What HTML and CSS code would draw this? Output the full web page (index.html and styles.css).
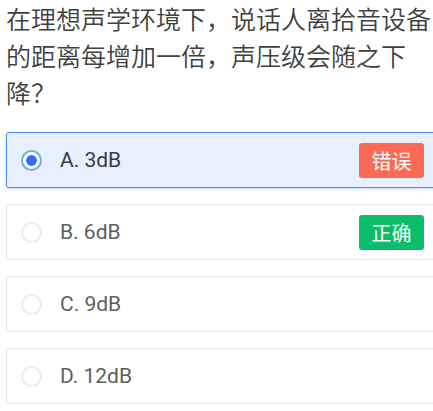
FILE: index.html
```html
<!DOCTYPE html>
<html lang="zh">
<head>
<meta charset="utf-8">
<link rel="stylesheet" href="styles.css">
</head>
<body>
<div class="page">
  <p class="question">在理想声学环境下，说话人离拾音设备的距离每增加一倍，声压级会随之下降？</p>
  <div class="options">
    <div class="option selected">
      <span class="radio"></span>
      <span class="label">A. 3dB</span>
      <span class="badge wrong">错误</span>
    </div>
    <div class="option">
      <span class="radio"></span>
      <span class="label">B. 6dB</span>
      <span class="badge right">正确</span>
    </div>
    <div class="option">
      <span class="radio"></span>
      <span class="label">C. 9dB</span>
    </div>
    <div class="option">
      <span class="radio"></span>
      <span class="label">D. 12dB</span>
    </div>
  </div>
</div>
</body>
</html>
```

FILE: styles.css
```css
html, body {
  margin: 0;
  padding: 0;
  background: #ffffff;
  overflow: hidden;
}
.page {
  width: 446px;
  padding-left: 6px;
  box-sizing: border-box;
  font-family: Roboto, "Noto Sans CJK SC", sans-serif;
}
.question {
  margin: 0;
  font-family: "Noto Sans CJK SC", sans-serif;
  font-size: 25px;
  font-weight: 350;
  line-height: 37px;
  color: #404040;
  width: 430px;
}
.options {
  margin-top: 21px;
  display: flex;
  flex-direction: column;
  gap: 16px;
}
.option {
  height: 56px;
  box-sizing: border-box;
  border: 1.5px solid #e2e8ef;
  border-radius: 3px;
  display: flex;
  align-items: center;
  padding-left: 14px;
  padding-right: 14px;
  background: #fff;
}
.option.selected {
  background: #e8effd;
  border-color: #4d8ef5;
  box-shadow: 0 1px 3px rgba(60, 120, 240, 0.35);
}
.radio {
  width: 21px;
  height: 21px;
  box-sizing: border-box;
  border: 2px solid #e8edf3;
  border-radius: 50%;
  background: #fff;
  flex: none;
}
.selected .radio {
  border: 2.5px solid #7aa6f8;
  background: radial-gradient(circle, #2a6ff6 0, #2a6ff6 5px, #ffffff 5.5px);
}
.label {
  margin-left: 18px;
  font-size: 21px;
  color: #5e5e5e;
}
.selected .label {
  color: #3a3a3a;
}
.badge {
  margin-left: auto;
  margin-right: 7px;
  width: 65px;
  height: 35px;
  border-radius: 3px;
  color: #fff;
  font-family: "Noto Sans CJK SC", sans-serif;
  font-size: 20px;
  display: flex;
  align-items: center;
  justify-content: center;
}
.badge.wrong {
  background: #fd6a54;
}
.badge.right {
  background: #0bbd68;
}
```
